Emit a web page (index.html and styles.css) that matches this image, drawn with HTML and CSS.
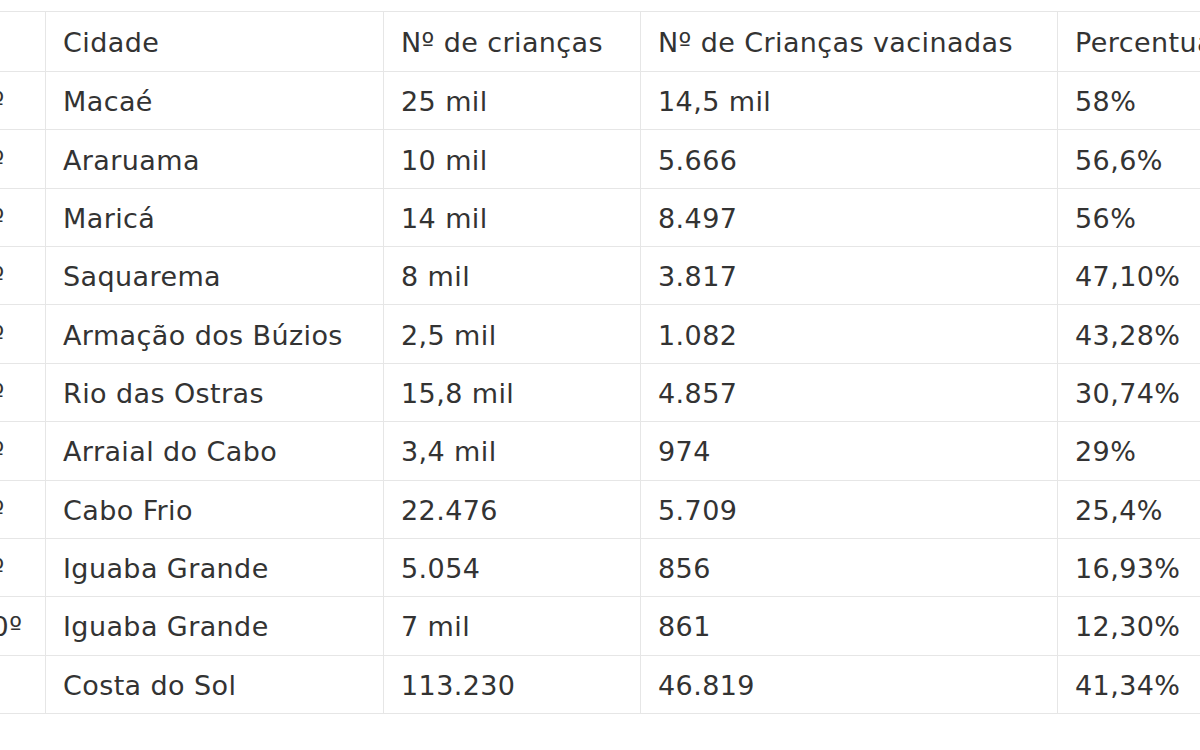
FILE: index.html
```html
<!DOCTYPE html>
<html lang="pt-BR">
<head>
<meta charset="utf-8">
<title>Vacinação infantil - Costa do Sol</title>
<link rel="stylesheet" href="styles.css">
</head>
<body>
<div class="frame">
  <table class="ranking">
    <colgroup>
      <col class="c-rank">
      <col class="c-city">
      <col class="c-total">
      <col class="c-vac">
      <col class="c-pct">
    </colgroup>
    <thead>
      <tr class="head">
        <td></td>
        <td>Cidade</td>
        <td>Nº de crianças</td>
        <td>Nº de Crianças vacinadas</td>
        <td>Percentual</td>
      </tr>
    </thead>
    <tbody>
      <tr><td>1º</td><td>Macaé</td><td>25 mil</td><td>14,5 mil</td><td>58%</td></tr>
      <tr><td>2º</td><td>Araruama</td><td>10 mil</td><td>5.666</td><td>56,6%</td></tr>
      <tr><td>3º</td><td>Maricá</td><td>14 mil</td><td>8.497</td><td>56%</td></tr>
      <tr><td>4º</td><td>Saquarema</td><td>8 mil</td><td>3.817</td><td>47,10%</td></tr>
      <tr><td>5º</td><td>Armação dos Búzios</td><td>2,5 mil</td><td>1.082</td><td>43,28%</td></tr>
      <tr><td>6º</td><td>Rio das Ostras</td><td>15,8 mil</td><td>4.857</td><td>30,74%</td></tr>
      <tr><td>7º</td><td>Arraial do Cabo</td><td>3,4 mil</td><td>974</td><td>29%</td></tr>
      <tr><td>8º</td><td>Cabo Frio</td><td>22.476</td><td>5.709</td><td>25,4%</td></tr>
      <tr><td>9º</td><td>Iguaba Grande</td><td>5.054</td><td>856</td><td>16,93%</td></tr>
      <tr><td>10º</td><td>Iguaba Grande</td><td>7 mil</td><td>861</td><td>12,30%</td></tr>
      <tr><td></td><td>Costa do Sol</td><td>113.230</td><td>46.819</td><td>41,34%</td></tr>
    </tbody>
  </table>
</div>
</body>
</html>
```

FILE: styles.css
```css
html, body {
  margin: 0;
  padding: 0;
  background: #ffffff;
  overflow: hidden;
}

.frame {
  width: 1200px;
  height: 750px;
  overflow: hidden;
  padding-top: 11px;
  box-sizing: border-box;
}

.ranking {
  margin-left: -44px;
  border-collapse: collapse;
  table-layout: fixed;
  width: 1400px;
  font-family: "DejaVu Sans", Verdana, sans-serif;
  font-size: 27px;
  letter-spacing: 0.4px;
  color: #333333;
}

.c-rank { width: 89px; }
.c-city { width: 338px; }
.c-total { width: 257px; }
.c-vac { width: 417px; }
.c-pct { width: 299px; }

.ranking td {
  border: 1px solid #e6e6e6;
  padding: 2px 0 0 17px;
  white-space: nowrap;
  overflow: hidden;
  vertical-align: middle;
  height: 55.36px;
}

.ranking .head td {
  height: 57px;
}
```
